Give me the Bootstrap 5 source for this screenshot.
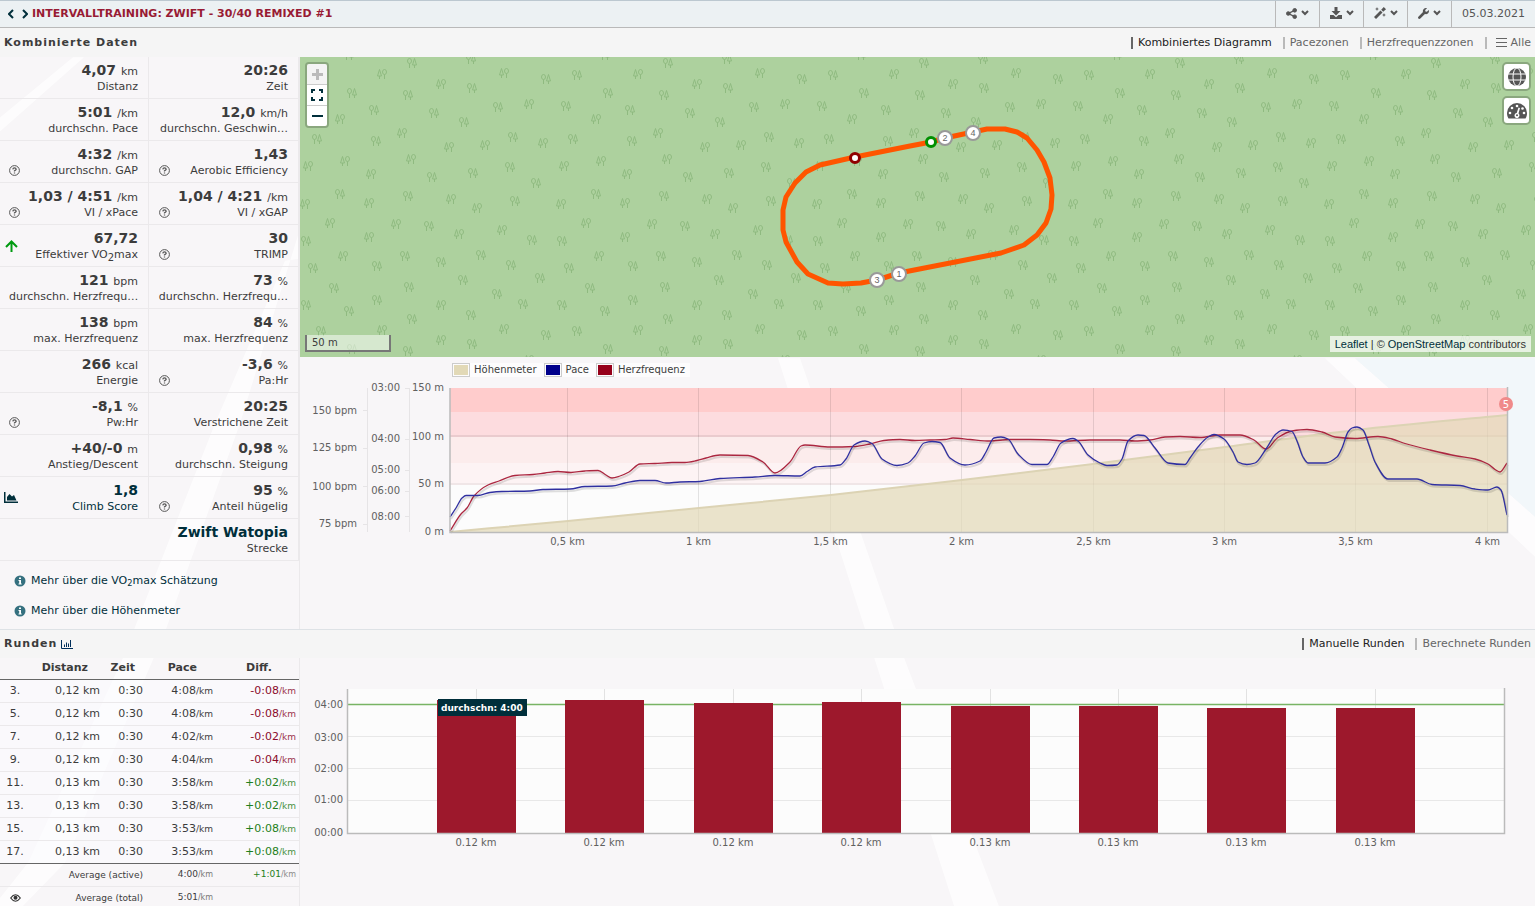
<!DOCTYPE html>
<html lang="de">
<head>
<meta charset="utf-8">
<meta name="viewport" content="width=device-width, initial-scale=1">
<title>Intervalltraining: Zwift - 30/40 Remixed #1</title>
<link href="https://cdn.jsdelivr.net/npm/bootstrap@5.3.0/dist/css/bootstrap.min.css" rel="stylesheet">
<style>
html{scrollbar-width:none}
body{font:11px/16px Verdana,"DejaVu Sans",sans-serif;color:#3c3c3c;background:#f8f6f8;position:relative}
a{color:#002f3b;text-decoration:none}
svg{display:block}
.backdrop{position:absolute;inset:0;width:100%;height:100%;z-index:-1}
.topbar{height:28px;background:#ecf1f3;border-top:1px solid #bcc8d0;border-bottom:1px solid #b9b9b9}
.topbar h1{font-size:11px;line-height:16px;font-weight:700;color:#981b34;text-transform:uppercase}
.tool{width:44px;padding:0 6px 2px;border:0;border-left:1px solid #b9b9b9;background:none;color:#555}
.datebox{border-left:1px solid #b9b9b9;padding:0 10px;color:#555}
.sectionbar{min-height:29px;background:#f5f5f5;padding:0 4px}
.sectionbar h2{font-size:11px;line-height:16px;font-weight:700;letter-spacing:1px}
.tabs{gap:11px}
.tabs a{color:#666;border-left:2px solid #b9b9b9;padding-left:5px;line-height:12px}
.tabs a.active{color:#222;border-color:#666}
.side{width:300px;flex:none;border-right:1px solid #ebe9eb}
.stats{display:grid;grid-template-columns:149px 150px}
.stat{height:42px;padding:5px 10px 0 9px;border-right:1px solid #ebe9eb;border-bottom:1px solid #ebe9eb;text-align:right;position:relative}
.stat b{font-size:14px;white-space:pre}
.stat .lbl{display:block;line-height:14px}
.stat sub{font-size:10px;line-height:0}
.stat .ic{position:absolute;left:9px;bottom:6px}
.stat:nth-child(even) .ic{left:10px}
.stat .ic.up{left:5px;bottom:14px}
.stat .ic.area{left:4px;bottom:15px}
.wide{grid-column:1/-1}
.links{padding:12px 14px 10px;height:68px}
.links a{display:flex;align-items:center;gap:5px;height:16px;margin-bottom:14px}
.map{height:300px;background:#add19e;position:relative;overflow:hidden}
.map .fill{position:absolute;inset:0;width:100%;height:100%}
.zoomctl{position:absolute;left:5px;top:5px;border:2px solid #8aa77e;border-radius:4px;overflow:hidden}
.zoomctl button{width:20px;height:20px;padding:0;border:0;background:#fff;display:flex;align-items:center;justify-content:center;color:#002f3b}
.zoomctl button+button{height:21px;border-top:1px solid #ccc}
.zoomctl button:disabled{background:#f4f4f4;color:#bbb}
.layers{position:absolute;right:4px;top:5px;gap:5px}
.layers button{width:29px;height:29px;padding:0;border:2px solid #8aa77e;border-radius:5px;background:#fff;color:#555;display:flex;align-items:center;justify-content:center}
.scale{position:absolute;left:5px;bottom:5px;width:86px;height:17px;padding-left:5px;border:2px solid #777;border-top:0;background:rgba(255,255,255,.5);font-size:10px;line-height:16px}
.attrib{position:absolute;right:4px;bottom:5px;padding:0 5px;background:rgba(255,255,255,.7);font:11px/16px "Liberation Sans",Arial,sans-serif;color:#333}
.legendrow{position:absolute;left:152px;top:6px;height:14px;background:rgba(255,255,255,.7);font-size:10px;line-height:14px;padding-right:5px}
.swatch{width:18px;height:14px;border:1px solid #ccc;padding:1px;background:#fff;background-clip:content-box;margin-right:4px}
.swatch+.swatch,.legendrow .next{margin-left:7px}
.plot{width:100%;height:auto}
.plot text{font-size:10px;fill:#606060}
.laps{width:299px;table-layout:fixed;border-collapse:collapse}
.laps th,.laps td{padding:0;height:23px;text-align:right}
.laps th{height:21px}
.laps thead{border-bottom:1px solid #666}
.laps tbody tr{background:rgba(252,252,255,.5);border-bottom:1px solid #ebe9eb}
.laps tbody tr:last-child{border-bottom:1px solid #666}
.laps tfoot tr:first-child td{border-bottom:1px solid #ebe9eb}
.laps small{font-size:9px}
.laps tfoot{font-size:9px}
.laps tfoot small{font-size:8px;color:#777}
.laps td:last-child,.laps th:last-child{padding-right:3px}
.neg{color:#8b0c2c}.pos{color:#1f8020}
.neg small,.pos small{opacity:.85}
</style>
</head>
<body>
<svg class="backdrop" viewBox="0 0 1535 906" preserveAspectRatio="none" aria-hidden="true">
<path fill="#fff" opacity=".7" d="M73 57H84L0 131V117ZM300 258V228L240 422 165 630 65 860 20 906H0V895L28 860 122 658 215 422 285 260ZM778 357H800L905 658 1000 906H955L875 658ZM1325 357H1355L1535 515V555Z"/>
<path fill="#f2f7fa" d="M1355 357H1535V515Z"/>
</svg>
<header class="topbar d-flex">
<div class="d-flex align-items-center flex-grow-1">
<a href="#" class="ms-2" aria-label="Vorherige"><svg width="6" height="10" fill="none" stroke="currentColor" stroke-width="2"><path d="M5 1 1 5 5 9"/></svg></a>
<a href="#" class="ms-2" aria-label="Nächste"><svg width="6" height="10" fill="none" stroke="currentColor" stroke-width="2"><path d="M1 1 5 5 1 9"/></svg></a>
<h1 class="m-0 ms-1">Intervalltraining: Zwift - 30/40 Remixed #1</h1>
</div>
<button class="tool d-flex align-items-center justify-content-center gap-1" aria-label="Teilen"><svg width="11" height="11" viewBox="0 0 12 12" fill="currentColor" stroke="currentColor"><path d="M9.500 2.500 2.500 6 9.500 9.500" fill="none" stroke-width="1.500"/><circle cx="9.500" cy="2.500" r="2"/><circle cx="2.500" cy="6" r="2"/><circle cx="9.500" cy="9.500" r="2"/></svg><svg width="8" height="6" fill="none" stroke="currentColor" stroke-width="2"><path d="M1 1 4 4 7 1"/></svg></button>
<button class="tool d-flex align-items-center justify-content-center gap-1" aria-label="Export"><svg width="12" height="12" viewBox="0 0 12 12" fill="currentColor"><path d="M4.500 0h3v4H10.500L6 8.500 1.500 4h3ZM0 8H3.500L6 10.200 8.500 8H12v4H0Z"/></svg><svg width="8" height="6" fill="none" stroke="currentColor" stroke-width="2"><path d="M1 1 4 4 7 1"/></svg></button>
<button class="tool d-flex align-items-center justify-content-center gap-1" aria-label="Werkzeuge"><svg width="12" height="12" viewBox="0 0 12 12" fill="currentColor"><path d="M0 10 6.500 3.500 8.500 5.500 2 12ZM7.200 2.800 9.800 0 12 2.200 9.200 4.800ZM3 0 3.600 1.400 5 2 3.600 2.600 3 4 2.400 2.600 1 2 2.400 1.400ZM10 6 10.600 7.400 12 8 10.600 8.600 10 10 9.400 8.600 8 8 9.400 7.400Z"/></svg><svg width="8" height="6" fill="none" stroke="currentColor" stroke-width="2"><path d="M1 1 4 4 7 1"/></svg></button>
<button class="tool d-flex align-items-center justify-content-center gap-1" aria-label="Bearbeiten"><svg width="11" height="11" viewBox="0 0 512 512" fill="currentColor"><path d="M507.730 109.100c-2.240-9.030-13.540-12.090-20.120-5.510l-74.360 74.360-67.880-11.310-11.310-67.880 74.360-74.360c6.620-6.620 3.430-17.900-5.660-20.160-47.380-11.740-99.550.910-136.580 37.930-39.640 39.640-50.550 97.100-34.050 147.200L18.740 402.760c-24.990 24.990-24.990 65.510 0 90.500 24.990 24.990 65.510 24.990 90.500 0l213.210-213.210c50.120 16.710 107.470 5.680 147.370-34.220 37.070-37.070 49.700-89.320 37.910-136.730z"/></svg><svg width="8" height="6" fill="none" stroke="currentColor" stroke-width="2"><path d="M1 1 4 4 7 1"/></svg></button>
<div class="datebox d-flex align-items-center">05.03.2021</div>
</header>

<section>
<div class="sectionbar d-flex align-items-center justify-content-between">
<h2 class="m-0">Kombinierte Daten</h2>
<nav class="tabs d-flex">
<a class="active" href="#">Kombiniertes Diagramm</a><a href="#">Pacezonen</a><a href="#">Herzfrequenzzonen</a>
<a class="d-flex align-items-center" href="#"><svg class="mx-1" width="11" height="9" fill="currentColor"><path d="M0 0h11v1H0ZM0 4h11v1H0ZM0 8h11v1H0Z"/></svg>Alle</a>
</nav>
</div>
<div class="d-flex">
<aside class="side">
<div class="stats" id="stats"></div>
<div class="links">
<a href="#"><svg width="12" height="12" viewBox="0 0 12 12"><circle cx="6" cy="6" r="5.500" fill="#35707f"/><path fill="#fff" d="M5 2.500h2v1.500H5ZM4.500 5H7V8.500h.7v1H4.500v-1h.7V6h-.7Z"/></svg><span>Mehr über die VO<sub>2</sub>max Schätzung</span></a>
<a href="#"><svg width="12" height="12" viewBox="0 0 12 12"><circle cx="6" cy="6" r="5.500" fill="#35707f"/><path fill="#fff" d="M5 2.500h2v1.500H5ZM4.500 5H7V8.500h.7v1H4.500v-1h.7V6h-.7Z"/></svg><span>Mehr über die Höhenmeter</span></a>
</div>
</aside>
<div class="flex-grow-1">
<div class="map">
<svg class="fill" aria-hidden="true">
<defs>
<g id="ta" fill="none" stroke="#8fba80"><ellipse cx="-2.500" cy="-2" rx="2" ry="2.500"/><path d="M-2.500.500V5M2.500 2V5M.500 2 2.500-4.500 4.500 2Z"/></g>
<g id="tb" fill="none" stroke="#8fba80"><ellipse cx="2.500" cy="-2" rx="2" ry="2.500"/><path d="M2.500.500V5M-2.500 2V5M-4.500 2-2.500-4.500-.500 2Z"/></g>
<pattern id="forest" width="256" height="256" patternUnits="userSpaceOnUse"></pattern>
</defs>
<rect width="100%" height="100%" fill="url(#forest)"/>
</svg>
<svg class="fill" viewBox="300 57 1235 300" preserveAspectRatio="xMidYMid slice">
<path fill="none" stroke="#ff5500" stroke-width="5" stroke-linejoin="round" d="M855 157 820 165 806 172 795 183 786 197 783 210V230L786 242 797 262 808 274 828 283 843 284 861 283 877 280 899 273 1001 253 1024 245 1037 235 1046 223 1051 209 1052 195 1050 178 1044 162 1037 150 1027 138 1017 132 1005 129H987L973 132 945 138 931 142 910 146Z"/>
<circle cx="855" cy="158" r="4.500" fill="#fff" stroke="#900000" stroke-width="3"/>
<circle cx="931" cy="142" r="4.500" fill="#fff" stroke="#009000" stroke-width="3"/>
<g fill="#fff" stroke="#999" stroke-width="2"><circle cx="945" cy="138" r="7"/><circle cx="973" cy="133" r="7"/><circle cx="899" cy="274" r="7"/><circle cx="877" cy="280" r="7"/></g>
<g font-family="Liberation Sans,sans-serif" font-size="9" fill="#666" text-anchor="middle"><text x="945" y="141">2</text><text x="973" y="136">4</text><text x="899" y="277">1</text><text x="877" y="283">3</text></g>
</svg>
<div class="zoomctl">
<button disabled aria-label="Vergrößern"><svg width="11" height="11"><path fill="currentColor" d="M4 0h3v4h4v3H7v4H4V7H0V4h4Z"/></svg></button>
<button aria-label="Vollbild"><svg width="12" height="12" fill="none" stroke="currentColor" stroke-width="2"><path d="M1 4V1H4M8 1h3V4M11 8v3H8M4 11H1V8"/></svg></button>
<button aria-label="Verkleinern"><svg width="11" height="2"><path fill="currentColor" d="M0 0h11v2H0Z"/></svg></button>
</div>
<div class="layers d-flex flex-column">
<button aria-label="Karte"><svg width="18" height="18" viewBox="0 0 18 18"><circle cx="9" cy="9" r="9" fill="currentColor"/><g fill="none" stroke="#fff"><ellipse cx="9" cy="9" rx="4" ry="9"/><path d="M0 6H18M0 12H18"/></g></svg></button>
<button aria-label="Tempo"><svg width="20" height="18" viewBox="0 0 20 18"><path fill="currentColor" d="M10 1A10 10 0 0 0 0 11C0 13 .500 15 1.500 16.500H18.500C19.500 15 20 13 20 11A10 10 0 0 0 10 1Z"/><g fill="#fff"><circle cx="3" cy="11" r="1.300"/><circle cx="5" cy="6" r="1.300"/><circle cx="10" cy="4" r="1.300"/><circle cx="15.500" cy="6.500" r="1.300"/><circle cx="17" cy="11" r="1.300"/><path d="M11.500 5.500 13 6 11.500 11.500A2.500 2.500 0 1 1 9.700 11Z"/></g><circle cx="10" cy="13.300" r="1" fill="currentColor"/></svg></button>
</div>
<div class="scale">50 m</div>
<div class="attrib"><a href="#">Leaflet</a> | © <a href="#">OpenStreetMap</a> contributors</div>
</div>
<div class="position-relative">
<div class="legendrow d-flex align-items-center">
<span class="swatch" style="background-color:#e2d9b7"></span>Höhenmeter<span class="swatch next" style="background-color:#00008b"></span>Pace<span class="swatch next" style="background-color:#96001a"></span>Herzfrequenz
</div>
<svg class="plot" id="combo" viewBox="300 357 1235 272" role="img" aria-label="Kombiniertes Diagramm"></svg>
</div>
</div>
</div>
</section>

<section>
<div class="sectionbar d-flex align-items-center justify-content-between border-top">
<h2 class="m-0 d-flex align-items-center gap-1">Runden <svg width="12" height="9" viewBox="0 0 12 9"><path fill="none" stroke="#002f5b" d="M.500 0V8.500H12M3.500 7V4.500M5.500 7V2.500M7.500 7V3.500M9.500 7V0"/></svg></h2>
<nav class="tabs d-flex"><a class="active" href="#">Manuelle Runden</a><a href="#">Berechnete Runden</a></nav>
</div>
<div class="d-flex">
<div class="side">
<table class="laps">
<colgroup><col style="width:30px"><col style="width:70px"><col style="width:43px"><col style="width:70px"><col></colgroup>
<thead><tr><th></th><th><span class="pe-2 me-1">Distanz</span></th><th><span class="pe-1 me-1">Zeit</span></th><th class="pe-3">Pace</th><th><span class="pe-4">Diff.</span></th></tr></thead>
<tbody id="laps"></tbody>
<tfoot>
<tr><td></td><td colspan="2">Average (active)</td><td>4:00<small>/km</small></td><td class="pos">+1:01<small>/km</small></td></tr>
<tr><td><svg class="mx-auto" width="11" height="8" viewBox="0 0 11 8"><path fill="none" stroke="#333" stroke-width="1.200" d="M.700 4Q5.500-2.500 10.300 4 5.500 10.500.700 4Z"/><circle cx="5.500" cy="3.700" r="2" fill="#333"/></svg></td><td colspan="2">Average (total)</td><td>5:01<small>/km</small></td><td></td></tr>
</tfoot>
</table>
</div>
<div class="flex-grow-1"><svg class="plot" id="bars" viewBox="300 658 1235 248" role="img" aria-label="Runden"></svg></div>
</div>
</section>

<script>
// Key figures: value, unit, label, icon
const Q='<svg class="ic" width="11" height="11" viewBox="0 0 11 11"><circle cx="5.500" cy="5.500" r="4.900" fill="none" stroke="#555"/><path fill="none" stroke="#555" stroke-width="1.300" d="M3.800 4.300Q4 2.900 5.500 2.900T7.200 4.300Q7.200 5 5.500 5.800V6.600M5.500 7.400V8.600"/></svg>';
const UP='<svg class="ic up" width="13" height="12" fill="none" stroke="#009a10" stroke-width="2"><path d="M6.500 12V2M1 7 6.500 1.500 12 7"/></svg>';
const AREA='<svg class="ic area" width="14" height="11" fill="#002f3b"><path d="M0 0h1.500v9.500H14V11H0ZM3 8.500V5L5.500 2 8 4.500 10 3 12.500 8.500Z"/></svg>';
const stats=[['4,07','km','Distanz'],['20:26','','Zeit'],['5:01','/km','durchschn. Pace'],['12,0','km/h','durchschn. Geschwin…'],
['4:32','/km','durchschn. GAP',Q],['1,43','','Aerobic Efficiency',Q],['1,03 / 4:51','/km','VI / xPace',Q],['1,04 / 4:21','/km','VI / xGAP',Q],
['67,72','','Effektiver VO<sub>2</sub>max',UP],['30','','TRIMP',Q],['121','bpm','durchschn. Herzfrequ…'],['73','%','durchschn. Herzfrequ…'],
['138','bpm','max. Herzfrequenz'],['84','%','max. Herzfrequenz'],['266','kcal','Energie'],['-3,6','%','Pa:Hr',Q],['-8,1','%','Pw:Hr',Q],['20:25','','Verstrichene Zeit'],
['+40/-0','m','Anstieg/Descent'],['0,98','%','durchschn. Steigung'],['<a href="#">1,8</a>','','<a href="#">Climb Score</a>',AREA],['95','%','Anteil hügelig',Q],['<a href="#">Zwift Watopia</a>','','Strecke']];
document.getElementById('stats').innerHTML=stats.map((s,i)=>`<div class="stat${i==22?' wide':''}">${s[3]||''}<b>${s[0]}${s[1]?' ':''}</b>${s[1]}<span class="lbl text-nowrap">${s[2]}</span></div>`).join('');

// Laps
const laps=[[3,'0,12','4:08','-0:08'],[5,'0,12','4:08','-0:08'],[7,'0,12','4:02','-0:02'],[9,'0,12','4:04','-0:04'],[11,'0,13','3:58','+0:02'],[13,'0,13','3:58','+0:02'],[15,'0,13','3:53','+0:08'],[17,'0,13','3:53','+0:08']];
document.getElementById('laps').innerHTML=laps.map(l=>`<tr><td class="text-center">${l[0]}.</td><td>${l[1]} km</td><td>0:30</td><td>${l[2]}<small>/km</small></td><td class="${l[3][0]=='-'?'neg':'pos'}">${l[3]}<small>/km</small></td></tr>`).join('');

// Forest texture, repeated every 256 px; positions in thirds of a pixel
const A=[[336,18],[513,6],[516,92],[738,65],[63,54],[156,107],[324,113],[222,158],[402,167],[492,194],[594,149],[30,146],[51,245],[228,251],[639,239],[396,359],[519,347],[630,329],[708,377],[120,410],[324,416],[645,431],[387,506],[696,548],[18,551],[39,632],[231,626],[315,596],[423,614],[543,593],[633,623],[720,662],[102,692],[231,728],[327,689],[489,668],[591,710],[669,740],[18,743],[147,761]];
const B=[[246,50],[423,80],[612,47],[120,185],[687,140],[306,227],[447,269],[555,263],[729,257],[24,326],[135,311],[213,350],[333,305],[15,440],[207,437],[453,425],[531,452],[90,497],[207,539],[288,500],[477,530],[606,518],[129,596],[423,743]];
const tree=(id,p)=>[0,256,-256].flatMap(dx=>[0,256,-256].map(dy=>[Math.round(p[0]/3)+dx,Math.round(p[1]/3)+dy])).filter(q=>q[0]>-6&&q[0]<262&&q[1]>-6&&q[1]<262).map(q=>`<use href="#${id}" x="${q[0]}" y="${q[1]}"/>`).join('');
document.getElementById('forest').innerHTML=A.map(p=>tree('ta',p)).join('')+B.map(p=>tree('tb',p)).join('');

const txt=(x,y,s,a='end',o='')=>`<text x="${x}" y="${y}" text-anchor="${a}" ${o}>${s}</text>`;
// Monotone curve through points: no overshoot between samples
function curve(str){
  const n=str.split(/[ ,]+/).map(Number),p=[];for(let i=0;i<n.length;i+=2)p.push([n[i],n[i+1]]);
  const k=p.map((q,i)=>{
    if(!i||i==p.length-1)return null;
    const h0=q[0]-p[i-1][0],h1=p[i+1][0]-q[0],a=(q[1]-p[i-1][1])/h0,b=(p[i+1][1]-q[1])/h1;
    return a*b<=0?0:3*(h0+h1)/((2*h1+h0)/a+(h1+2*h0)/b);
  });
  const e=p.length-1;
  k[0]=(p[1][1]-p[0][1])/(p[1][0]-p[0][0]);k[e]=(p[e][1]-p[e-1][1])/(p[e][0]-p[e-1][0]);
  let d='M'+p[0];
  for(let i=0;i<e;i++){const b=p[i],c=p[i+1],h=(c[0]-b[0])/3;d+=`C${b[0]+h} ${b[1]+h*k[i]} ${c[0]-h} ${c[1]-h*k[i+1]} ${c}`;}
  return d;
}
const hr='450,531 461,514 467,508 474,496 488,485 499,481 515,475.500 533,474.500 545,473 558,471.500 571,472.500 585,471 598,470.500 606,475 612,478 620,476 629,472 640,464 655,463.500 672,462.500 685,462.500 697,460.500 706,458 720,455 748,455.500 763,462 775,473 790,462 801,446 805,445 830,447 855,446.500 870,444 884,440.500 900,439.500 915,440.500 930,440 945,439.500 953,438 970,439.500 990,441 1010,439.500 1030,439.500 1050,440 1065,441 1090,440 1120,440 1135,441 1150,440 1165,437 1180,436.500 1200,437.500 1220,435 1240,435 1254,440 1266,449 1278,437.500 1292,431 1307,429.500 1322,432 1335,437 1355,438.500 1378,436.500 1392,439 1405,443.500 1430,450 1457,456 1475,459 1488,464 1495,469.500 1500,472 1507,463';
const pace='450,517 456,508 462,498 466,495.500 478,495.500 490,492.500 502,491.500 530,491 543,489.500 570,489 585,486.500 612,486 625,483 640,480.500 655,480.500 666,483 680,482 700,481.500 720,478.500 755,477 775,475.500 800,476 807,471.500 815,467 840,465 846,459 854,445 865,441 872,443.500 882,459 897,465.500 908,463 915,456 924,443 932,441.500 940,442.500 950,458 965,465 980,461 986,452 994,438 1001,437 1008,439 1018,454 1032,464.500 1047,464.500 1053,457 1061,443 1073,438.500 1078,441 1088,455 1100,463 1107,465.500 1117,465 1122,459 1128,441 1138,435 1144,435.500 1155,448 1168,463 1185,464.500 1190,458 1198,447 1208,437 1214,434.500 1224,439 1233,452 1238,462 1247,464.500 1255,463 1266,449 1276,434 1283,430 1292,431.500 1297,441 1303,457 1308,463 1325,463 1337,457 1342,448 1348,432 1352,428 1357,427 1363,430 1369,445 1375,462 1388,479 1417,479 1432,484.500 1460,485.500 1475,489 1488,490 1497,487 1501,490 1507,515';
const ele='450,532 568,521 699,508 831,495 962,480 1093,464 1225,447 1356,430 1507,415';
let s='';
[[388,24,'#ffcccc'],[412,25,'#fddcdf'],[437,26,'#fcecec'],[463,22,'#fdf3f4'],[485,47,'#fcfcfc']].forEach(z=>s+=`<rect x="450" y="${z[0]}" width="1057" height="${z[1]}" fill="${z[2]}"/>`);
['0,5','1','1,5','2','2,5','3','3,5','4'].forEach((k,i)=>{const x=567.500+Math.round(i*131.400);s+=`<path stroke="#000" stroke-opacity=".1" d="M${x} 388V532"/>`+txt(x,545,k+' km','middle')});
s+='<path stroke="#000" stroke-opacity=".1" stroke-width="1.500" d="M450 436H1507"/><path stroke="#000" stroke-opacity=".05" stroke-width="2" d="M450 484H1507"/>';
s+=`<path fill="#e2d9b7" fill-opacity=".7" d="${curve(ele)}V532Z"/><path fill="none" stroke="#dcd3b4" stroke-width="2" d="${curve(ele)}"/>`;
[[hr,'#ab2740'],[pace,'#3030a0']].forEach(c=>s+=`<path fill="none" stroke="#000" stroke-opacity=".12" stroke-width="2" transform="translate(1 2)" d="${curve(c[0])}"/><path fill="none" stroke="${c[1]}" stroke-width="1.300" d="${curve(c[0])}"/>`);
s+='<path fill="none" stroke="#bbb" stroke-width="1.500" d="M450 388V532.500H1507.500V387"/><path fill="none" stroke="#e6e4e6" d="M367.500 388V532M363 410.500H367M363 448.500H367M363 486.500H367M363 524.500H367M409.500 388V532M405 388.500H409M405 439.500H409M405 470.500H409M405 491.500H409M405 516.500H409"/>';
[['150',414],['125',451],['100',490],['75',527]].forEach(t=>s+=txt(357,t[1],t[0]+' bpm'));
[['03:00',391],['04:00',442],['05:00',473],['06:00',494],['08:00',520]].forEach(t=>s+=txt(400,t[1],t[0]));
[['150',391],['100',440],['50',487],['0',535]].forEach(t=>s+=txt(444,t[1],t[0]+' m'));
s+='<circle cx="1506" cy="404" r="7" fill="#f08a8a"/>'+txt(1506,408,'5','middle','style="fill:#fff"');
document.getElementById('combo').innerHTML=s;

// Lap bars
s='<rect x="348" y="689" width="1156" height="144" fill="#fcfcfc"/><path stroke="#e8e8e8" d="M348 800.500H1504M348 768.500H1504M348 736.500H1504"/>';
const tops=[700,700,703,702,706,706,708,708];
tops.forEach((t,i)=>{const x=437+Math.round(i*128.400);s+=`<path stroke="#e2e2e2" d="M${x+39.500} 689V833"/><rect x="${x}" y="${t}" width="79" height="${833-t}" fill="#9d182c"/>`});
s+='<path stroke="#78b464" stroke-width="1.500" d="M348 704.500H1504"/>';
tops.forEach((t,i)=>{const x=437+Math.round(i*128.400);if(t<706)s+=`<rect x="${x}" y="${Math.max(t,703)}" width="79" height="4" fill="#9d182c"/>`;s+=txt(x+39,846,(i<4?'0.12':'0.13')+' km','middle')});
s+='<path fill="none" stroke="#bbb" stroke-width="1.500" d="M347.500 689V833.500H1504.500V688"/>';
[708,741,772,803,836].forEach((y,i)=>s+=txt(343,y,'0'+(4-i)+':00'));
s+='<rect x="438" y="699" width="89" height="17" fill="#002f3b"/>'+txt(441,711,'durchschn: 4:00','start','style="fill:#fff;font-weight:700;font-size:9px"');
document.getElementById('bars').innerHTML=s;
</script>
<script src="https://cdn.jsdelivr.net/npm/bootstrap@5.3.0/dist/js/bootstrap.bundle.min.js"></script>
</body>
</html>
